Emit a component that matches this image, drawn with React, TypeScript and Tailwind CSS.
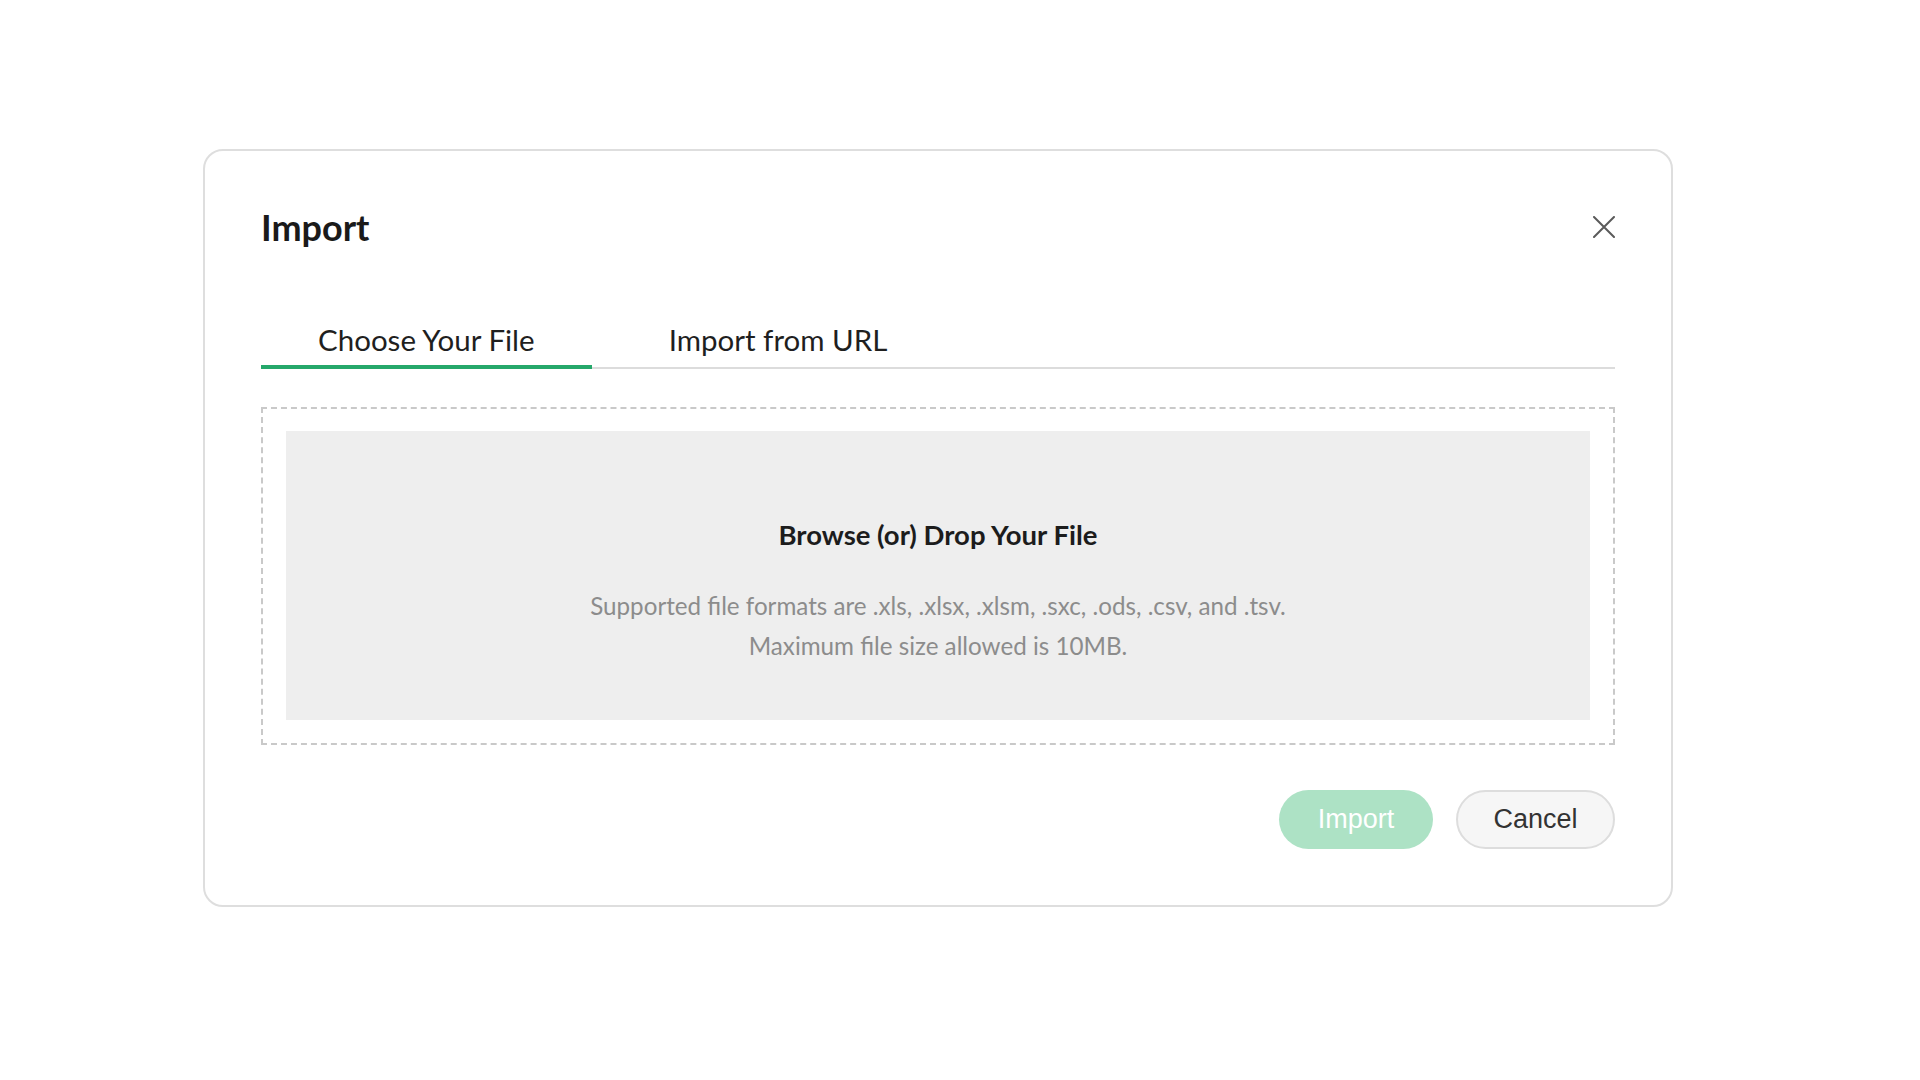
import { useState } from 'react';

function CloseIcon() {
  return (
    <svg width="22" height="22" viewBox="0 0 22 22" fill="none">
      <path d="M1 1L21 21M21 1L1 21" stroke="#5a5a5a" strokeWidth="2" strokeLinecap="round" />
    </svg>
  );
}

const tabs = ['Choose Your File', 'Import from URL'];

export default function App() {
  const [active, setActive] = useState(0);

  return (
    <div className="min-h-screen bg-white pl-[203px] pt-[149px] font-['Lato','Noto_Sans',sans-serif]">
      <div className="w-[1470px] rounded-[20px] border-2 border-[#dedede] bg-white px-[56px] pt-[54px] pb-[56px]">
        <div className="flex h-[44px] items-center justify-between">
          <h1 className="text-[36px] leading-[44px] font-bold text-[#1a1a1a]">Import</h1>
          <button className="mr-[-1px] flex h-[24px] w-[24px] items-center justify-center">
            <CloseIcon />
          </button>
        </div>

        <div className="mt-[74px] flex gap-[20px] border-b-2 border-[#dcdcdc]">
          {tabs.map((t, i) => (
            <button
              key={t}
              onClick={() => setActive(i)}
              className={
                i === active
                  ? 'mb-[-2px] border-b-4 border-[#25a86b] px-[57px] pb-[8px] text-[29.5px] leading-[34px] text-[#1f1f1f]'
                  : 'mb-[-2px] border-b-4 border-transparent px-[57px] pb-[8px] text-[29.5px] leading-[34px] text-[#1f1f1f]'
              }
            >
              {t}
            </button>
          ))}
        </div>

        <div className="mt-[38px] border-2 border-dashed border-[#c9c9c9] px-[23px] pt-[22px] pb-[23px]">
          <div className="flex h-[289px] flex-col items-center bg-[#eeeeee] pt-[89px] text-center">
            <h2 className="text-[27.5px] leading-[29px] font-bold text-[#1c1c1c]">
              Browse (or) Drop Your File
            </h2>
            <p className="mt-[37px] text-[24.2px] leading-[40px] text-[#8c8c8c]">
              Supported file formats are .xls, .xlsx, .xlsm, .sxc, .ods, .csv, and .tsv.
              <br />
              Maximum file size allowed is 10MB.
            </p>
          </div>
        </div>

        <div className="mt-[45px] flex justify-end gap-[23px] font-['Liberation_Sans',Arial,sans-serif]">
          <button className="h-[59px] w-[154px] rounded-full bg-[#ade2c5] text-[27px] text-white">
            Import
          </button>
          <button className="h-[59px] w-[159px] rounded-full border-2 border-[#dddddd] bg-[#f6f6f6] text-[27px] text-[#333333]">
            Cancel
          </button>
        </div>
      </div>
    </div>
  );
}
